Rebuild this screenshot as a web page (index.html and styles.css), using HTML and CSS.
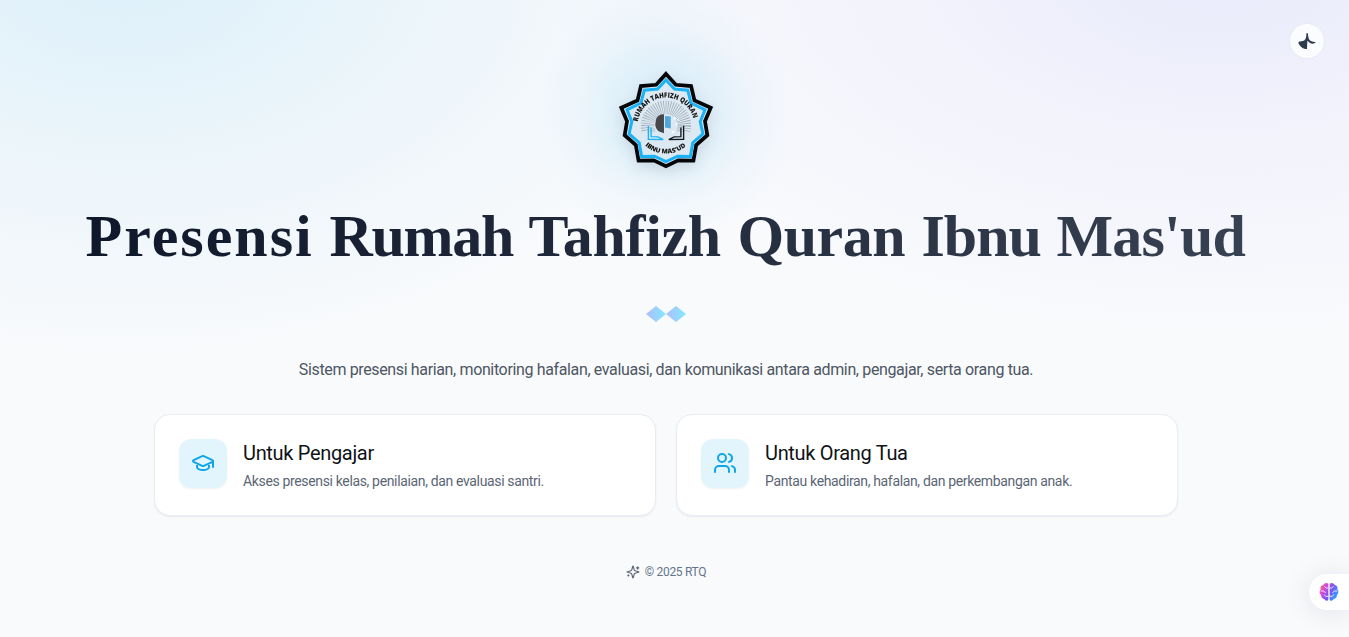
FILE: index.html
```html
<!DOCTYPE html>
<html lang="id">
<head>
<meta charset="utf-8">
<title>Presensi Rumah Tahfizh Quran Ibnu Mas'ud</title>
<link rel="stylesheet" href="styles.css">
</head>
<body>
<main class="page">
  <div class="logo-wrap">
    <svg class="logo" viewBox="0 0 360 360" width="122" height="122">
      <defs>
        <path id="arc-top" d="M97 182A84 84 0 0 1 263 182"/>
        <path id="arc-bottom" d="M118 252A92 92 0 0 0 242 252"/>
      </defs>
      <path class="star-dark" d="M180 41L209 73L254 77L264 119L312 141L295 181L302 222L269 251L261 297L216 296L180 313L144 296L99 297L91 251L58 222L65 181L48 141L96 119L106 77L151 73Z"/>
      <path class="star-blue" d="M180 59L205 86L244 89L254 127L295 147L281 182L289 218L259 244L252 285L214 284L180 300L146 284L108 285L101 244L71 218L79 182L65 147L106 127L116 89L155 86Z"/>
      <circle class="rays" cx="180" cy="194" r="54"/>
      <path class="brain-half" d="M174 160c-14 0-23 8-24 20-4 12-1 22 8 30l16 6z"/>
      <path class="door" d="M177 165l17 2v35l-17-3z"/>
      <path class="book-blue" d="M128 194v40l43 1M136 199v27l20 1 16 8"/>
      <path class="book-dark" d="M232 194v40l-43 1M224 199v27l-20 1-16 8"/>
      <path class="specks" d="M203 170l5 5M209 187l4 4M197 214l8-3M214 178l4-2"/>
      <text class="logo-text"><textPath href="#arc-top" textLength="228" lengthAdjust="spacingAndGlyphs">RUMAH TAHFIZH QURAN</textPath></text>
      <text class="logo-text logo-text-small"><textPath href="#arc-bottom" textLength="132" lengthAdjust="spacingAndGlyphs">IBNU MAS'UD</textPath></text>
    </svg>
  </div>
  <h1 class="title"><span class="w1">Presensi </span><span class="w2">Rumah </span><span class="w3">Tahfizh </span><span class="w4">Quran </span><span class="w5">Ibnu </span><span class="w6">Mas'ud</span></h1>
  <div class="ornament"><i class="diamond"></i><i class="diamond"></i></div>
  <p class="lead">Sistem presensi harian, monitoring hafalan, evaluasi, dan komunikasi antara admin, pengajar, serta orang tua.</p>
  <section class="cards">
    <article class="card">
      <div class="tile"><svg class="icon" viewBox="0 0 24 24"><path d="M21.42 10.922a1 1 0 0 0-.019-1.838L12.83 5.18a2 2 0 0 0-1.66 0L2.6 9.08a1 1 0 0 0 0 1.832l8.57 3.908a2 2 0 0 0 1.66 0zM22 10v6M6 12.5V16a6 3 0 0 0 12 0v-3.5"/></svg></div>
      <div><h2 class="card-title">Untuk Pengajar</h2><p class="card-text">Akses presensi kelas, penilaian, dan evaluasi santri.</p></div>
    </article>
    <article class="card">
      <div class="tile"><svg class="icon" viewBox="0 0 24 24"><path d="M16 21v-2a4 4 0 0 0-4-4H6a4 4 0 0 0-4 4v2M22 21v-2a4 4 0 0 0-3-3.87M16 3.13a4 4 0 0 1 0 7.75"/><circle cx="9" cy="7" r="4"/></svg></div>
      <div><h2 class="card-title">Untuk Orang Tua</h2><p class="card-text">Pantau kehadiran, hafalan, dan perkembangan anak.</p></div>
    </article>
  </section>
  <footer class="foot">
    <svg class="spark" viewBox="0 0 24 24"><path d="M9.937 15.5A2 2 0 0 0 8.5 14.063l-6.135-1.582a.5.5 0 0 1 0-.962L8.5 9.936A2 2 0 0 0 9.937 8.5l1.582-6.135a.5.5 0 0 1 .963 0L14.063 8.5A2 2 0 0 0 15.5 9.937l6.135 1.581a.5.5 0 0 1 0 .964L15.5 14.063a2 2 0 0 0-1.437 1.437l-1.582 6.135a.5.5 0 0 1-.963 0zM20 3v4M22 5h-4M4 17v2M5 18H3"/></svg>
    <span>© 2025 RTQ</span>
  </footer>
</main>
<button class="theme" aria-label="Tema"><svg viewBox="0 0 60 60" width="20" height="20"><path fill="#2f3b4d" d="M30 6C32 6 34 8 33 13L35 22C37 30 44 33 56 33C52 40 44 39 38 35L31 29L30 54C19 54 9 47 4 35C5 30 11 32 17 30C24 28 27 23 28 14C28 9 28 6 30 6Z"/></svg></button>
<div class="assistant"><svg viewBox="0 0 60 60" width="20" height="20">
  <defs><linearGradient id="brain" x1="0" y1="0" x2="1" y2=".5"><stop offset="0" stop-color="#ff7a2d"/><stop offset=".3" stop-color="#e44ad2"/><stop offset=".65" stop-color="#7b55f6"/><stop offset="1" stop-color="#2f9bff"/></linearGradient></defs>
  <path fill="url(#brain)" d="M28 5C22 0 14 4 13 9C6 10 3 16 5 22C0 27 1 36 6 39C6 47 12 51 16 51C19 58 26 57 28 53ZM32 5C38 0 46 4 47 9C54 10 57 16 55 22C60 27 59 36 54 39C54 47 48 51 44 51C41 58 34 57 32 53Z"/>
  <path class="folds" d="M28 18h-7l-5-5M5 27h9l6 6M28 43h-8l-4-5M32 18h6l6-5M55 27h-9l-6 6M32 43h8l5-6"/>
</svg></div>
</body>
</html>
```

FILE: styles.css
```css
* { box-sizing: border-box; }
body {
  margin: 0;
  height: 637px;
  overflow: hidden;
  font-family: Roboto, sans-serif;
  color: #0f172a;
  background:
    radial-gradient(640px 400px at 125px -30px, rgba(14,165,233,.12), rgba(20,165,220,.055) 50%, transparent 100%),
    radial-gradient(680px 370px at 1220px -30px, rgba(99,102,241,.105), rgba(99,102,241,.045) 50%, transparent 100%),
    #f9fafc;
}
.page {
  width: 1332px;
  padding-top: 59px;
  display: flex;
  flex-direction: column;
  align-items: center;
}
.logo-wrap {
  width: 300px;
  height: 300px;
  margin: -89px 0 -91px;
  display: grid;
  place-items: center;
  background: radial-gradient(circle at 50% 49%, rgba(14,165,233,.12), rgba(14,165,233,.085) 25%, rgba(14,165,233,.03) 42%, transparent 60%);
}
.logo { margin-top: 1px; filter: drop-shadow(0 5px 7px rgba(15,23,42,.12)); }
.star-dark { fill: #dce9f3; stroke: #050608; stroke-width: 11; }
.star-blue { fill: none; stroke: #1cb2f6; stroke-width: 9; }
.rays { fill: none; stroke: #87949d; stroke-width: 40; stroke-dasharray: 2 4; opacity: .75; clip-path: inset(0 0 38% 0); }
.brain-half { fill: #45474a; }
.door { fill: #4ea6dc; }
.book-blue, .book-dark { fill: none; stroke-width: 4; stroke: #1cb2f6; }
.book-dark { stroke: #15191d; }
.specks { stroke: #fff; stroke-width: 5; }
.logo-text { font: 800 21px "Open Sans", sans-serif; fill: #111; }
.logo-text-small { font-size: 19px; }
.title {
  display: flex;
  margin: 27px 0 0;
  font: 700 60px/60px "Liberation Serif", serif;
  height: 78px;
  white-space: nowrap;
  color: transparent;
  background: linear-gradient(90deg, #0f172a, #374151);
  background-clip: text;
  -webkit-background-clip: text;
}
.w1 { width: 244px; letter-spacing: 2px; }
.w2 { width: 199px; letter-spacing: -1.3px; }
.w3 { width: 209px; letter-spacing: -.3px; }
.w4 { width: 184px; letter-spacing: -.5px; }
.w5 { width: 135px; letter-spacing: -1px; }
.w6 { width: 190px; letter-spacing: -.8px; }
.ornament { display: flex; height: 16px; margin-top: 22px; }
.diamond { width: 20px; height: 16px; background: linear-gradient(90deg, #b0bcfb, #82e9ff); clip-path: polygon(50% 0, 100% 50%, 50% 100%, 0 50%); }
.lead { margin: 34px 0 0; font-size: 16px; line-height: 28px; letter-spacing: -.36px; color: #4d5663; white-space: nowrap; }
.cards { display: grid; grid-template-columns: 502px 502px; gap: 20px; margin-top: 30px; }
.card { height: 102px; padding: 24px; display: flex; gap: 16px; background: #fff; border: 1px solid #e9edf3; border-radius: 16px; box-shadow: 0 1px 2px rgba(15,23,42,.07); }
.tile { width: 48px; height: 49px; flex: none; border-radius: 12px; display: grid; place-items: center; background: #e3f5fc; box-shadow: 0 1px 2px rgba(15,23,42,.06); }
.icon { width: 24px; height: 24px; margin-top: -1px; fill: none; stroke: #0ea5e9; stroke-width: 2; stroke-linecap: round; stroke-linejoin: round; }
.card-title { margin: 0; font-size: 20px; font-weight: 400; line-height: 28px; letter-spacing: -.32px; color: #0f1318; white-space: nowrap; }
.card-text { margin: 4px 0 0; font-size: 14px; line-height: 20px; letter-spacing: -.35px; color: #5b6675; white-space: nowrap; }
.foot { display: flex; align-items: center; gap: 5px; margin-top: 48px; font-size: 12px; line-height: 16px; letter-spacing: -.3px; color: #64748b; }
.spark { width: 14px; height: 14px; fill: none; stroke: #5b6675; stroke-width: 2; stroke-linecap: round; stroke-linejoin: round; }
.theme { position: absolute; left: 1289px; top: 23px; width: 36px; height: 36px; padding: 0; display: grid; place-items: center; border: 1px solid #e9ebf4; border-radius: 50%; background: #fbfcfe; }
.assistant { position: absolute; left: 1309px; top: 574px; width: 40px; height: 36px; padding: 8px 0 0 10px; border-radius: 18px 0 0 18px; background: #fff; box-shadow: 0 2px 28px rgba(15,23,42,.1); }
.folds { fill: none; stroke: #efe3ff; stroke-width: 3; }
```
